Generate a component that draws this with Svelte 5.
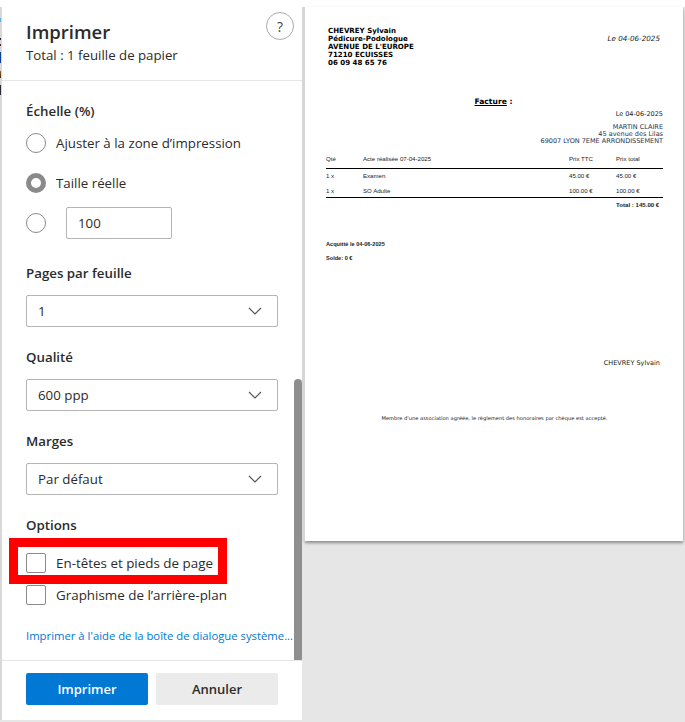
<script>
  const selects = [
    { label: 'Pages par feuille', value: '1' },
    { label: 'Qualité', value: '600 ppp' },
    { label: 'Marges', value: 'Par défaut' },
  ];

  const lignes = [
    { qte: '1 x', acte: 'Examen', ttc: '45.00 €', total: '45.00 €' },
    { qte: '1 x', acte: 'SO Adulte', ttc: '100.00 €', total: '100.00 €' },
  ];
</script>

<div class="fenetre">
  <div class="haut"></div>

  <div class="contenu">
    <div class="bord"></div>

    <aside class="panneau">
      <header>
        <div>
          <h1>Imprimer</h1>
          <p>Total : 1 feuille de papier</p>
        </div>
        <button class="aide" aria-label="Aide">?</button>
      </header>

      <div class="reglages">
        <h2 class="premier">Échelle (%)</h2>
        <label class="radio r1"><span class="rond"></span>Ajuster à la zone d’impression</label>
        <label class="radio r2"><span class="rond actif"></span>Taille réelle</label>
        <div class="radio r3"><span class="rond"></span><span class="champ">100</span></div>

        {#each selects as s}
          <h2>{s.label}</h2>
          <div class="select">
            <span>{s.value}</span>
            <svg width="14" height="8" viewBox="0 0 14 8"><path d="M1 1l6 6 6-6" fill="none" stroke="#555" stroke-width="1.1" /></svg>
          </div>
        {/each}

        <h2 class="options">Options</h2>
        <label class="case c1"><span class="carre"></span>En-têtes et pieds de page</label>
        <label class="case c2"><span class="carre"></span>Graphisme de l’arrière-plan</label>
        <a href="#systeme" class="lien">Imprimer à l'aide de la boîte de dialogue système...</a>
      </div>

      <footer>
        <button class="primaire">Imprimer</button>
        <button class="secondaire">Annuler</button>
      </footer>

      <div class="encadre"></div>
      <div class="ascenseur"></div>
    </aside>

    <main class="apercu">
      <section class="page">
        <div class="entete">
          <div class="emetteur">
            CHEVREY Sylvain<br />Pédicure-Podologue<br />AVENUE DE L'EUROPE<br />71210 ECUISSES<br />06 09 48 65 76
          </div>
          <div class="date">Le 04-06-2025</div>
        </div>

        <div class="titre"><u>Facture</u> :</div>
        <div class="date2">Le 04-06-2025</div>
        <div class="patient">MARTIN CLAIRE<br />45 avenue des Lilas<br />69007 LYON 7EME ARRONDISSEMENT</div>

        <div class="ligne tete">
          <span>Qté</span><span>Acte réalisée 07-04-2025</span><span>Prix TTC</span><span>Prix total</span>
        </div>
        <div class="corps">
          {#each lignes as l}
            <div class="ligne">
              <span>{l.qte}</span><span>{l.acte}</span><span>{l.ttc}</span><span>{l.total}</span>
            </div>
          {/each}
        </div>
        <div class="ligne somme"><span></span><span></span><span></span><span>Total : 145.00 €</span></div>

        <div class="acquitte">Acquitté le 04-06-2025</div>
        <div class="solde">Solde: 0 €</div>
        <div class="signature">CHEVREY Sylvain</div>
        <div class="mention">Membre d'une association agréée, le règlement des honoraires par chèque est accepté.</div>
      </section>
    </main>
  </div>
</div>

<style>
  :global(body) {
    margin: 0;
    background: #e6e6e6;
  }

  .fenetre {
    width: 685px;
    height: 722px;
    overflow: hidden;
    font-family: "Open Sans", "Noto Sans", sans-serif;
    color: #2b2b2b;
  }

  .haut {
    height: 7px;
    background: #fff;
  }

  .contenu {
    display: flex;
    height: 713px;
  }

  .bord {
    width: 2px;
    flex: none;
    background-color: #d8d8d8;
    background-image: linear-gradient(
      to bottom,
      transparent 11px, #5ab0e6 11px, #5ab0e6 15px,
      transparent 15px, transparent 31px, #2a2a4a 31px, #2a2a4a 33px,
      transparent 33px, transparent 37px, #6a1a2a 37px, #6a1a2a 39px,
      transparent 39px, transparent 45px, #0f3f9a 45px, #0f3f9a 56px,
      transparent 56px, transparent 64px, #b0620f 64px, #3a2a1a 71px,
      transparent 71px, transparent 78px, #2a2a3a 78px, #2a2a3a 88px,
      transparent 88px
    );
    background-size: 1px 100%;
    background-repeat: no-repeat;
  }

  .panneau {
    position: relative;
    width: 300px;
    flex: none;
    display: flex;
    flex-direction: column;
    background: #fff;
  }

  header {
    height: 74px;
    box-sizing: border-box;
    display: flex;
    justify-content: space-between;
    padding: 12px 8px 0 24px;
    border-bottom: 1px solid #e6e6e6;
  }

  h1 {
    margin: 0;
    font-size: 18.5px;
    line-height: 26px;
    font-weight: 600;
  }

  header p {
    margin: 1px 0 0;
    font-size: 13.25px;
    line-height: 18px;
  }

  .aide {
    width: 28px;
    height: 28px;
    margin-top: -7px;
    padding: 0;
    border: 1px solid #ababab;
    border-radius: 50%;
    background: #fff;
    font: 14px "Open Sans", sans-serif;
    color: #444;
  }

  .reglages {
    flex: 1;
    padding: 0 0 0 24px;
  }

  h2 {
    margin: 21px 0 13px;
    font-size: 13.3px;
    line-height: 18px;
    font-weight: 600;
  }

  h2.premier {
    margin: 21px 0 0;
  }

  .radio {
    display: flex;
    align-items: center;
    gap: 10px;
    font-size: 13.3px;
    height: 32px;
  }

  .r1 { margin-top: 7px; }
  .r2 { margin-top: 8px; }
  .r3 {
    margin-top: 8px;
    margin-bottom: 25px;
  }

  .rond {
    width: 20px;
    height: 20px;
    box-sizing: border-box;
    border: 1px solid #8a8a8a;
    border-radius: 50%;
  }

  .rond.actif {
    border: 5px solid #8a8a8a;
  }

  .champ {
    width: 106px;
    height: 32px;
    box-sizing: border-box;
    margin-left: 10px;
    padding-left: 11px;
    line-height: 31px;
    border: 1px solid #b5b5b5;
    border-radius: 2px;
  }

  .select {
    width: 252px;
    height: 32px;
    box-sizing: border-box;
    display: flex;
    align-items: center;
    justify-content: space-between;
    padding: 0 15px 0 11px;
    border: 1px solid #b5b5b5;
    border-radius: 2px;
    font-size: 13.3px;
  }

  .r3 + h2 {
    margin-top: 0;
  }

  h2.options {
    margin: 21px 0 0;
  }

  .case {
    display: flex;
    align-items: center;
    gap: 10px;
    height: 20px;
    font-size: 13.4px;
  }

  .c1 { margin-top: 19px; }
  .c2 { margin-top: 12px; }

  .carre {
    width: 20px;
    height: 20px;
    box-sizing: border-box;
    border: 1px solid #8a8a8a;
    border-radius: 2px;
  }

  .lien {
    display: block;
    margin-top: 23px;
    width: 268px;
    white-space: nowrap;
    font-size: 11.3px;
    line-height: 16px;
    color: #0078d4;
    text-decoration: none;
  }

  footer {
    height: 60px;
    box-sizing: border-box;
    display: flex;
    gap: 8px;
    padding: 12px 0 0 24px;
    border-top: 1px solid #e6e6e6;
  }

  footer button {
    width: 122px;
    height: 32px;
    padding: 0;
    border: 0;
    border-radius: 2px;
    font: 600 13px "Open Sans", sans-serif;
  }

  .primaire {
    background: #0078d4;
    color: #fff;
  }

  .secondaire {
    background: #ebebeb;
    color: #2b2b2b;
  }

  .encadre {
    position: absolute;
    left: 7px;
    top: 531px;
    width: 218px;
    height: 46px;
    box-sizing: border-box;
    border: 9px solid #fe0000;
  }

  .ascenseur {
    position: absolute;
    left: 292px;
    top: 372px;
    width: 8px;
    height: 281px;
    border-radius: 4px 4px 0 0;
    background: #8f8f8f;
  }

  .apercu {
    flex: 1;
    min-width: 0;
    padding-left: 3px;
    height: 713px;
  }

  .page {
    width: 378px;
    height: 534px;
    box-sizing: border-box;
    padding: 20px 20px 0 21px;
    background: #fff;
    box-shadow: -3px 0 0 #d6d6d6, 0 2px 3px rgba(0, 0, 0, 0.4);
    font-family: "DejaVu Sans", sans-serif;
    font-size: 6.5px;
    color: #1a1a1a;
  }

  .entete {
    display: flex;
    justify-content: space-between;
    padding: 0 3px 0 2px;
  }

  .emetteur {
    font-size: 7.05px;
    line-height: 8px;
    font-weight: 700;
    color: #000;
  }

  .date {
    margin-top: 8px;
    font-size: 7.2px;
    line-height: 8px;
    font-style: italic;
  }

  .titre {
    margin-top: 30px;
    text-align: center;
    font-size: 7.6px;
    line-height: 10px;
    font-weight: 700;
    color: #000;
    padding-right: 2px;
  }

  .date2 {
    margin-top: 3px;
    text-align: right;
    line-height: 8px;
  }

  .patient {
    margin-top: 6px;
    text-align: right;
    line-height: 7px;
    color: #26324f;
  }

  .ligne {
    display: grid;
    grid-template-columns: 37px 206px 47px 1fr;
    font-family: "Liberation Sans", sans-serif;
    font-size: 6.1px;
    line-height: 8px;
  }

  .tete {
    margin-top: 10px;
    padding-bottom: 5px;
    border-bottom: 1px solid #000;
  }

  .corps {
    padding-top: 3px;
    border-bottom: 1px solid #000;
    display: flex;
    flex-direction: column;
    gap: 6.5px;
    padding-bottom: 2px;
  }

  .somme {
    margin-top: 3px;
    font-weight: 700;
    white-space: nowrap;
  }

  .acquitte,
  .solde {
    font-family: "Liberation Sans", sans-serif;
    font-size: 5.6px;
    line-height: 8px;
    font-weight: 700;
  }

  .acquitte { margin-top: 31px; }
  .solde { margin-top: 6px; }

  .signature {
    margin-top: 97px;
    padding-right: 3px;
    text-align: right;
    line-height: 8px;
  }

  .mention {
    margin-top: 47px;
    text-align: center;
    font-size: 5.13px;
    line-height: 8px;
    white-space: nowrap;
  }
</style>
